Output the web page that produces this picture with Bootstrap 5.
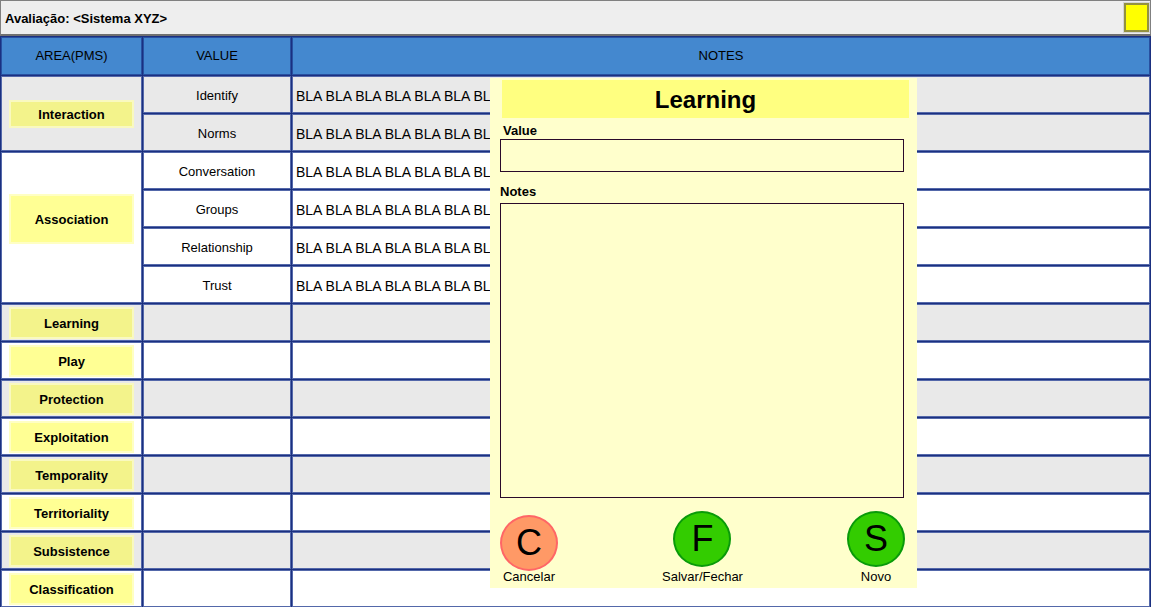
<!DOCTYPE html>
<html lang="pt-BR">
<head>
<meta charset="utf-8">
<meta name="viewport" content="width=device-width, initial-scale=1">
<title>Avaliação</title>
<link href="https://cdn.jsdelivr.net/npm/bootstrap@5.3.0/dist/css/bootstrap.min.css" rel="stylesheet">
<style>
  body { font: 13px/16px "Liberation Sans", Arial, sans-serif; color: #000; }
  .topbar { height: 36px; background: #eee; border: 1px solid #808080; border-bottom: 2px solid #707070; padding: 0 1px 0 4px; }
  .topbar h1 { font-size: 13px; line-height: 16px; padding-top: 2px; }
  .note-toggle { width: 25px; height: 29px; background: #ff0; border: 2px solid #93913f; box-shadow: 0 0 0 1px #d3d3d3; padding: 0; }

  /* Grid lines: a dark gap between cells with a lighter edge on each side */
  .grid-wrap { margin-bottom: -1px; }
  .pms-grid { width: 100%; table-layout: fixed; border-collapse: separate; border-spacing: 1px; background: #1b3080; }
  .pms-grid th, .pms-grid td { height: 37px; padding: 0 3px; border: 1px solid #5468aa; background: #fff; text-align: center; vertical-align: middle; white-space: nowrap; overflow: hidden; }
  .pms-grid td { padding-top: 2px; }
  .pms-grid thead th { height: 38px; background: #4488cf; border-color: #2850a0; font-weight: 400; }
  .pms-grid .shade > * { background: #e9e9e9; }
  .pms-grid td.note-text { text-align: left; font-size: 14px; }
  .col-area { width: 141px; }
  .col-value { width: 148px; }
  .area-btn { display: block; width: 125px; height: 32px; margin: 0 auto; padding: 2px 0 0; border: 2px solid #ffffc4; background: #ffff94; font-weight: 700; color: #000; }
  .shade .area-btn { background: #f3f38b; border-color: #f9f9c0; }
  .area-btn.low { height: 28px; }
  .area-btn.tall { height: 50px; }
  .pms-grid th.raised { padding-bottom: 18px; }

  .note-panel { top: 42px; left: 490px; width: 427px; height: 510px; padding: 2px 12px 0 10px; background: #ffc; }
  .note-panel h2 { margin: 0 -4px 0 2px; height: 38px; line-height: 40px; background: #ffff80; font-size: 24px; font-weight: 700; text-align: center; }
  .note-panel label { font-weight: 700; }
  .value-label { padding: 5px 0 0 3px; }
  .notes-label { padding: 12px 0 3px; }
  .note-panel input, .note-panel textarea { display: block; width: 100%; border: 1px solid #2a0a2a; background: transparent; padding: 4px; resize: none; border-radius: 0; }
  .note-panel input { height: 33px; }
  .note-panel textarea { height: 295px; }
  .fields { padding-right: 1px; }
  .actions { padding-top: 13px; }
  .round-btn { border: 0; background: none; padding: 0; min-width: 58px; line-height: 12px; color: #000; }
  .disc { width: 58px; height: 56px; border-radius: 50%; border: 2px solid #099a09; background: #3c0; font-size: 36px; line-height: 52px; }
  .disc.cancel { background: #f96; border-color: #f66; }
</style>
</head>
<body>
<header class="topbar d-flex align-items-center justify-content-between">
  <h1 class="m-0 fw-bold">Avaliação: &lt;Sistema XYZ&gt;</h1>
  <button type="button" class="note-toggle" aria-label="Nota"></button>
</header>
<main class="position-relative">
  <div class="grid-wrap">
    <table class="pms-grid">
      <colgroup><col class="col-area"><col class="col-value"><col></colgroup>
      <thead>
        <tr><th class="col-area" scope="col">AREA(PMS)</th><th class="col-value" scope="col">VALUE</th><th scope="col">NOTES</th></tr>
      </thead>
      <tbody>
        <tr class="shade"><th rowspan="2" scope="rowgroup"><button type="button" class="area-btn low">Interaction</button></th><td>Identify</td><td class="note-text">BLA BLA BLA BLA BLA BLA BLA</td></tr>
        <tr class="shade"><td>Norms</td><td class="note-text">BLA BLA BLA BLA BLA BLA BLA</td></tr>
        <tr><th rowspan="4" class="raised" scope="rowgroup"><button type="button" class="area-btn tall">Association</button></th><td>Conversation</td><td class="note-text">BLA BLA BLA BLA BLA BLA BLA</td></tr>
        <tr><td>Groups</td><td class="note-text">BLA BLA BLA BLA BLA BLA BLA</td></tr>
        <tr><td>Relationship</td><td class="note-text">BLA BLA BLA BLA BLA BLA BLA</td></tr>
        <tr><td>Trust</td><td class="note-text">BLA BLA BLA BLA BLA BLA BLA</td></tr>
        <tr class="shade"><th scope="row"><button type="button" class="area-btn">Learning</button></th><td></td><td></td></tr>
        <tr><th scope="row"><button type="button" class="area-btn">Play</button></th><td></td><td></td></tr>
        <tr class="shade"><th scope="row"><button type="button" class="area-btn">Protection</button></th><td></td><td></td></tr>
        <tr><th scope="row"><button type="button" class="area-btn">Exploitation</button></th><td></td><td></td></tr>
        <tr class="shade"><th scope="row"><button type="button" class="area-btn">Temporality</button></th><td></td><td></td></tr>
        <tr><th scope="row"><button type="button" class="area-btn">Territoriality</button></th><td></td><td></td></tr>
        <tr class="shade"><th scope="row"><button type="button" class="area-btn">Subsistence</button></th><td></td><td></td></tr>
        <tr><th scope="row"><button type="button" class="area-btn">Classification</button></th><td></td><td></td></tr>
      </tbody>
    </table>
  </div>
  <form class="note-panel position-absolute">
    <h2>Learning</h2>
    <div class="fields">
      <label for="value" class="value-label d-block">Value</label>
      <input id="value" type="text">
      <label for="notes" class="notes-label d-block">Notes</label>
      <textarea id="notes"></textarea>
    </div>
    <div class="actions d-flex justify-content-between align-items-end">
      <button type="button" class="round-btn d-flex flex-column align-items-center"><span class="disc cancel">C</span><span>Cancelar</span></button>
      <button type="button" class="round-btn d-flex flex-column align-items-center gap-1"><span class="disc">F</span><span>Salvar/Fechar</span></button>
      <button type="button" class="round-btn d-flex flex-column align-items-center gap-1"><span class="disc">S</span><span>Novo</span></button>
    </div>
  </form>
</main>
<script src="https://cdn.jsdelivr.net/npm/bootstrap@5.3.0/dist/js/bootstrap.bundle.min.js"></script>
</body>
</html>
